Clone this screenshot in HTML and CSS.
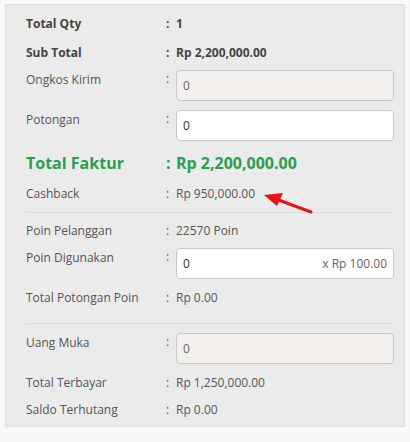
FILE: index.html
```html
<!DOCTYPE html>
<html>
<head>
<meta charset="utf-8">
<link rel="stylesheet" href="styles.css">
</head>
<body>
<div class="panel">
  <div class="row bold first"><div class="label">Total Qty</div><div class="colon">:</div><div class="value">1</div></div>
  <div class="row bold"><div class="label">Sub Total</div><div class="colon">:</div><div class="value">Rp 2,200,000.00</div></div>
  <div class="row field g7"><div class="label">Ongkos Kirim</div><div class="colon">:</div><div class="value"><input class="input readonly" value="0" readonly></div></div>
  <div class="row field"><div class="label">Potongan</div><div class="colon">:</div><div class="value"><input class="input" value="0"></div></div>
  <div class="row total"><div class="label">Total Faktur</div><div class="colon">:</div><div class="value">Rp 2,200,000.00</div></div>
  <div class="row"><div class="label">Cashback</div><div class="colon">:</div><div class="value">Rp 950,000.00</div></div>
  <hr class="sep">
  <div class="row tight"><div class="label">Poin Pelanggan</div><div class="colon">:</div><div class="value">22570 Poin</div></div>
  <div class="row field g7"><div class="label">Poin Digunakan</div><div class="colon">:</div><div class="value"><div class="input group"><span class="num">0</span><span class="addon">x Rp 100.00</span></div></div></div>
  <div class="row"><div class="label">Total Potongan Poin</div><div class="colon">:</div><div class="value">Rp 0.00</div></div>
  <hr class="sep sep2">
  <div class="row field tight2"><div class="label">Uang Muka</div><div class="colon">:</div><div class="value"><input class="input readonly" value="0" readonly></div></div>
  <div class="row"><div class="label">Total Terbayar</div><div class="colon">:</div><div class="value">Rp 1,250,000.00</div></div>
  <div class="row g7"><div class="label">Saldo Terhutang</div><div class="colon">:</div><div class="value">Rp 0.00</div></div>
  <svg class="arrow" width="60" height="30" viewBox="0 0 60 30">
    <line x1="49" y1="21" x2="14" y2="8" stroke="#e8121a" stroke-width="3" stroke-linecap="round"/>
    <polygon points="2,4 21,2 15,15" fill="#e8121a"/>
  </svg>
</div>
</body>
</html>
```
FILE: styles.css
```css
html, body {
  margin: 0;
  padding: 0;
  background: #f9f9f9;
}
body {
  font-family: "Open Sans", "Noto Sans", sans-serif;
  font-size: 12px;
  color: #555;
}
.panel {
  position: relative;
  margin: 4px 0 0 5px;
  width: 368px;
  height: 412px;
  padding: 9px 10px 0 20px;
  background: #ebebeb;
  border: 1px solid #dedede;
}
.row {
  display: flex;
  align-items: flex-start;
  line-height: 20px;
  margin-top: 9px;
}
.row.first { margin-top: 0; }
.row.g7 { margin-top: 7px; }
.row.tight { margin-top: 8px; }
.row.tight2 { margin-top: 9px; }
.label { width: 140px; flex: none; }
.colon { width: 10px; flex: none; }
.value { flex: 1; min-width: 0; }
.row.bold { font-weight: 700; color: #444; }
.row.field .colon { line-height: 18px; }
.row.total {
  margin-top: 10px;
  font-size: 16px;
  font-weight: 700;
  line-height: 24px;
  color: #2a9e4c;
}
.input {
  display: block;
  box-sizing: border-box;
  width: 100%;
  height: 31px;
  margin: 0;
  padding: 0 6px;
  border: 1px solid #c8c8c8;
  border-radius: 4px;
  background: #fff;
  font-family: "Open Sans", "Noto Sans", sans-serif;
  font-size: 12px;
  color: #333;
  outline: none;
}
.input.readonly { background: #f3f0ed; color: #666; }
.group {
  display: flex;
  align-items: center;
  justify-content: space-between;
}
.group .addon { color: #666; }
.sep {
  border: 0;
  border-top: 1px solid #dcdcdc;
  margin: 8px 0 0 0;
  height: 0;
}
.sep2 { margin-top: 15px; }
.arrow {
  position: absolute;
  left: 256px;
  top: 186px;
}
```
